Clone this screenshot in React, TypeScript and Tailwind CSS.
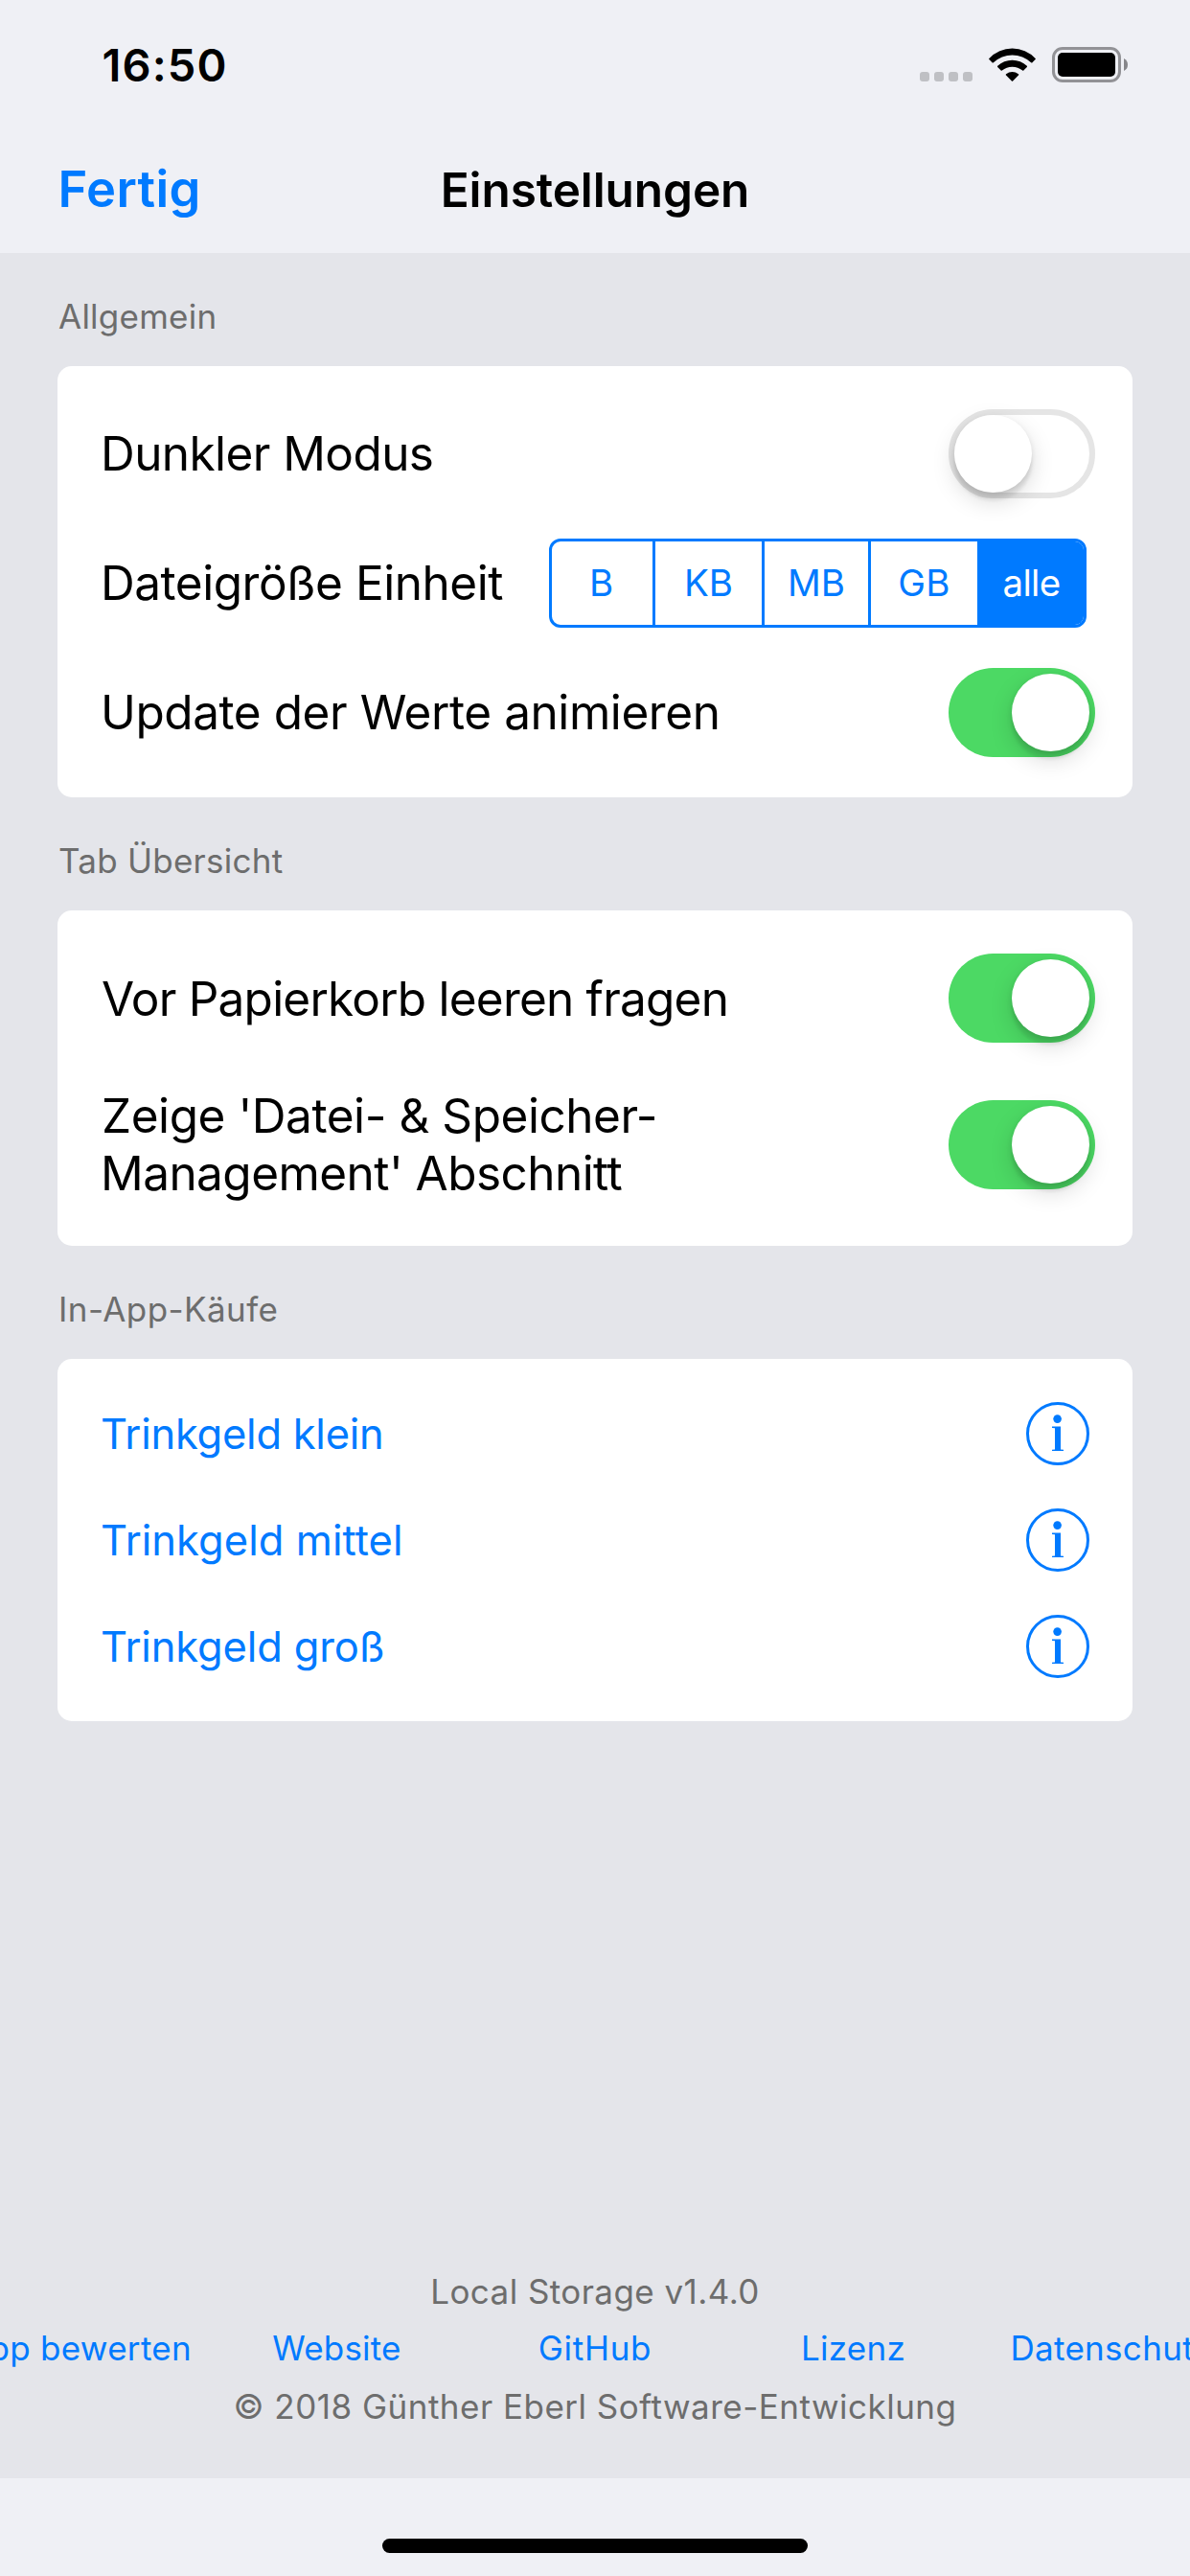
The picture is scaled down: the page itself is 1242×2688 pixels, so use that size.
import type { ReactNode } from "react";

function WifiIcon() {
  return (
    <svg className="h-9 w-[49px]" viewBox="0 0 49 36" fill="#000">
      <path d="M0.4 11.9 A33 33 0 0 1 48.6 11.9 Q49.2 12.4 48.6 13 L45.2 16.4 Q44.7 16.8 44.1 16.3 A28.3 28.3 0 0 0 4.9 16.3 Q4.3 16.8 3.8 16.4 L0.4 13 Q-0.2 12.4 0.4 11.9 Z" />
      <path d="M9.2 19.8 A22.4 22.4 0 0 1 39.8 19.8 Q40.4 20.4 39.8 21 L36.3 24.6 Q35.8 25.1 35.2 24.6 A17 17 0 0 0 13.8 24.6 Q13.2 25.1 12.7 24.6 L9.2 21 Q8.6 20.4 9.2 19.8 Z" />
      <path d="M18.1 28.3 A10.5 10.5 0 0 1 30.9 28.3 Q31.6 28.9 31 29.5 L25.1 35.5 Q24.5 36.1 23.9 35.5 L18 29.5 Q17.4 28.9 18.1 28.3 Z" />
    </svg>
  );
}

function BatteryIcon() {
  return (
    <div className="flex items-center gap-[3px]">
      <div className="h-[37px] w-[72px] rounded-[11px] border-[3px] border-[#929296] p-[3px]">
        <div className="h-[25px] w-[60px] rounded-[5px] bg-black" />
      </div>
      <svg className="h-[13px] w-1" viewBox="0 0 4 13" fill="#86868a">
        <path d="M0 0 Q4 2 4 6.5 Q4 11 0 13 Z" />
      </svg>
    </div>
  );
}

function StatusBar() {
  return (
    <div className="flex h-[166px] items-start justify-between pt-[39px] pr-[65px] pl-[106.5px]">
      <span className="text-[47px] leading-[57px] font-semibold tracking-[1.13px]">16:50</span>
      <div className="flex items-start pt-2.5">
        <div className="mr-[17px] flex gap-[5px] pt-[26px]">
          {[0, 1, 2, 3].map((dot) => (
            <span key={dot} className="size-2.5 rounded-[3px] bg-[#bfc0c4]" />
          ))}
        </div>
        <div className="mr-[17px]">
          <WifiIcon />
        </div>
        <BatteryIcon />
      </div>
    </div>
  );
}

function NavBar() {
  return (
    <div className="grid h-[98px] grid-cols-3 items-start">
      <button className="pl-[60.5px] text-left text-[52.5px] leading-[63px] font-[590] tracking-[0.35px] text-[#007aff]">
        Fertig
      </button>
      <h1 className="pt-0.5 text-center text-[49.5px] leading-[60px] font-semibold tracking-[-0.08px]">
        Einstellungen
      </h1>
    </div>
  );
}

function Section({ title, tracking, children }: { title: string; tracking: string; children: ReactNode }) {
  return (
    <section className="px-[60px] pt-[45px]">
      <h2 className={`mb-[31px] pl-px text-[35px] leading-[42px] text-[#6d6d6d] ${tracking}`}>{title}</h2>
      <div className="flex flex-col rounded-[15px] bg-white py-[45px] pl-[45px]">{children}</div>
    </section>
  );
}

function Switch({ on = false }: { on?: boolean }) {
  return (
    <div
      className={`flex h-[93px] w-[153px] shrink-0 items-center rounded-full ${
        on ? "justify-end bg-[#4cd964] px-1.5" : "justify-start border-[6px] border-[#e5e5e5] bg-white"
      }`}
    >
      <div className="size-[81px] shrink-0 rounded-full bg-white shadow-[0_9px_24px_rgba(0,0,0,0.15),0_9px_3px_rgba(0,0,0,0.05),0_3px_6px_rgba(0,0,0,0.1)]" />
    </div>
  );
}

function Label({ tracking, children }: { tracking: string; children: ReactNode }) {
  return <span className={`text-[49.5px] leading-[60px] whitespace-nowrap ${tracking}`}>{children}</span>;
}

function UnitPicker() {
  const cell = "flex justify-center pt-5 text-[38.5px] leading-[46px]";
  return (
    <div className="flex h-[93px] w-[561px] overflow-hidden rounded-[12px] border-[3px] border-[#007aff] text-[#007aff]">
      <div className={`${cell} w-[108px] border-r-[3px] border-[#007aff] pr-0.5`}>B</div>
      <div className={`${cell} w-[114px] border-r-[3px] border-[#007aff]`}>KB</div>
      <div className={`${cell} w-[111px] border-r-[3px] border-[#007aff]`}>MB</div>
      <div className={`${cell} w-[111px] tracking-[0.4px]`}>GB</div>
      <div className={`${cell} w-[111px] bg-[#007aff] pl-0.5 tracking-[-0.69px] text-white`}>alle</div>
    </div>
  );
}

function InfoIcon() {
  return (
    <svg className="size-[66px]" viewBox="0 0 66 66" fill="none">
      <circle cx="33" cy="33" r="31.5" stroke="#007aff" strokeWidth="3" />
      <circle cx="32.6" cy="17.6" r="4.3" fill="#007aff" />
      <path d="M27 25.4H36V49.5L39 49.8V51H27V49.8L30 49.5V27.2L27 26.9Z" fill="#007aff" />
    </svg>
  );
}

function TipRow({ tracking, children }: { tracking: string; children: ReactNode }) {
  return (
    <div className="flex h-[66px] items-start justify-between pr-[45px] text-[#007aff]">
      <span className={`pt-[7px] text-[43.5px] leading-[53px] ${tracking}`}>{children}</span>
      <InfoIcon />
    </div>
  );
}

function FooterLink({ tracking, children }: { tracking: string; children: ReactNode }) {
  return (
    <a className={`w-[269.5px] shrink-0 text-center whitespace-nowrap text-[#007aff] ${tracking}`}>{children}</a>
  );
}

function Footer() {
  return (
    <footer className="mt-auto flex flex-col items-center pb-[54px] text-[35px] leading-[42px] text-[#6d6d6d]">
      <p className="tracking-[0.44px]">Local Storage v1.4.0</p>
      <nav className="mt-[17px] flex w-full justify-center">
        <FooterLink tracking="tracking-[0.3px]">App bewerten</FooterLink>
        <FooterLink tracking="tracking-[0.18px]">Website</FooterLink>
        <FooterLink tracking="tracking-[0.73px]">GitHub</FooterLink>
        <FooterLink tracking="tracking-[0.29px]">Lizenz</FooterLink>
        <FooterLink tracking="tracking-[0.3px]">Datenschutz</FooterLink>
      </nav>
      <p className="mt-[19px] tracking-[0.49px]">© 2018 Günther Eberl Software-Entwicklung</p>
    </footer>
  );
}

export default function App() {
  return (
    <div className="flex h-[2688px] w-[1242px] flex-col overflow-hidden bg-[#eff0f5] font-['Inter',sans-serif] text-black">
      <header>
        <StatusBar />
        <NavBar />
      </header>

      <main className="flex h-[2322px] flex-col bg-[#e4e5ea]">
        <Section title="Allgemein" tracking="tracking-[0.24px]">
          <div className="flex h-[135px] items-start justify-between pr-[39px]">
            <div className="pt-4">
              <Label tracking="tracking-[-0.58px]">Dunkler Modus</Label>
            </div>
            <Switch />
          </div>
          <div className="flex h-[135px] items-start justify-between pr-12">
            <div className="pt-4">
              <Label tracking="tracking-[-0.48px]">Dateigröße Einheit</Label>
            </div>
            <UnitPicker />
          </div>
          <div className="flex h-[90px] items-start justify-between pr-[39px]">
            <div className="pt-4">
              <Label tracking="tracking-[-0.43px]">Update der Werte animieren</Label>
            </div>
            <Switch on />
          </div>
        </Section>

        <Section title="Tab Übersicht" tracking="tracking-[0.25px]">
          <div className="flex h-[139px] items-start justify-between pr-[39px]">
            <div className="pt-[17px] pl-px">
              <Label tracking="tracking-[-0.78px]">Vor Papierkorb leeren fragen</Label>
            </div>
            <Switch on />
          </div>
          <div className="flex h-[121px] items-start justify-between pr-[39px]">
            <div className="flex flex-col">
              <div className="flex pl-px">
                <Label tracking="tracking-[-0.45px]">Zeige 'Datei- &amp; Speicher-</Label>
              </div>
              <Label tracking="tracking-[-0.55px]">Management' Abschnitt</Label>
            </div>
            <div className="pt-3.5">
              <Switch on />
            </div>
          </div>
        </Section>

        <Section title="In-App-Käufe" tracking="tracking-[0.42px]">
          <div className="flex flex-col gap-[45px]">
            <TipRow tracking="tracking-[-0.25px]">Trinkgeld klein</TipRow>
            <TipRow tracking="tracking-[0.05px]">Trinkgeld mittel</TipRow>
            <TipRow tracking="tracking-[-0.15px]">Trinkgeld groß</TipRow>
          </div>
        </Section>

        <Footer />
      </main>

      <div className="flex justify-center pt-[63px]">
        <div className="h-[15px] w-[444px] rounded-full bg-black" />
      </div>
    </div>
  );
}
